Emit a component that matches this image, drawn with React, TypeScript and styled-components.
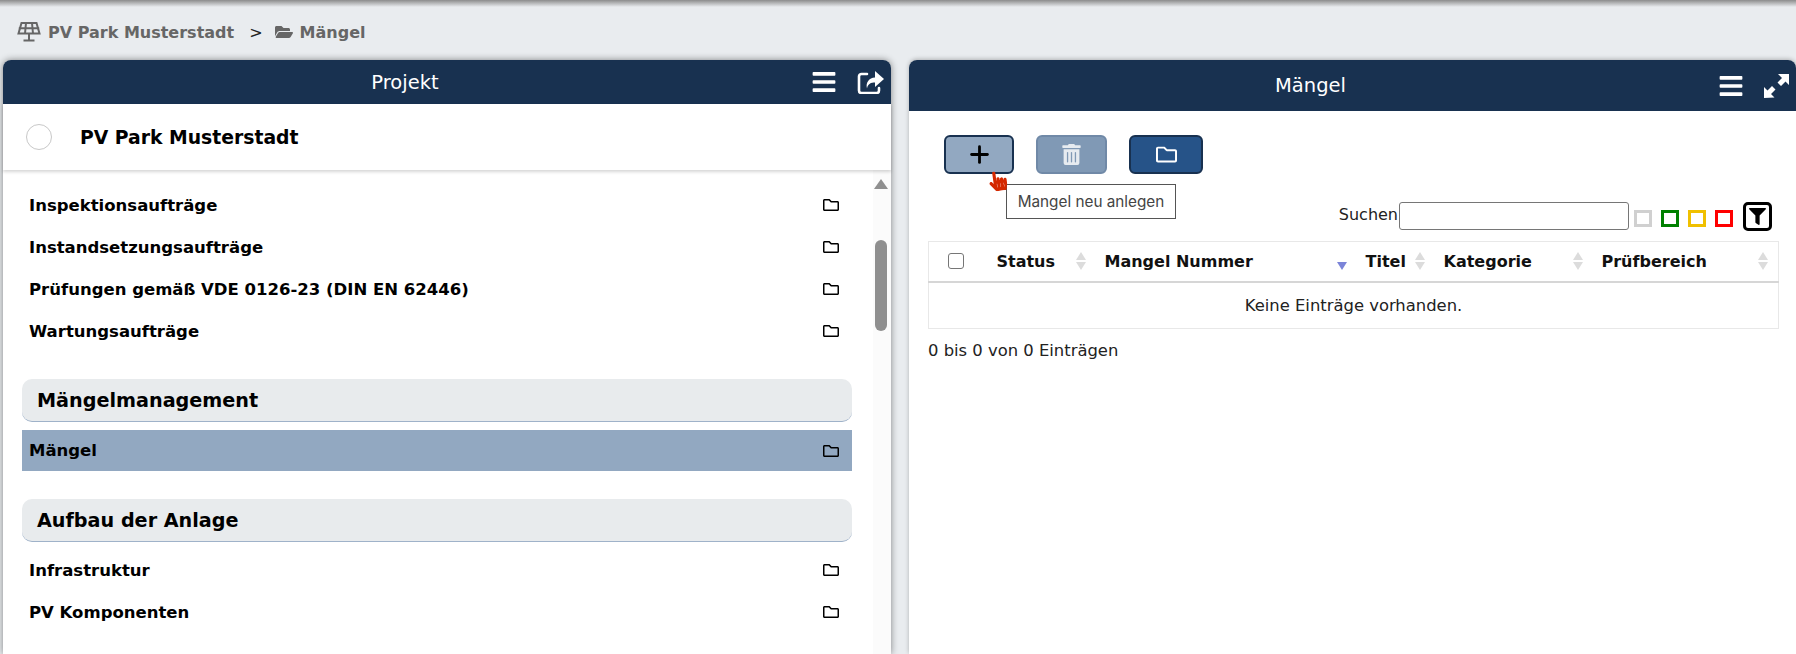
import React from "react";
import styled, { createGlobalStyle } from "styled-components";
import { Plus } from "lucide-react";
import {
  FaBars,
  FaFilter,
  FaFolderOpen,
  FaHandPointer,
  FaRegFolder,
  FaTrashAlt,
} from "react-icons/fa";

const GlobalStyle = createGlobalStyle`
  html, body {
    margin: 0;
    height: 100%;
    overflow: hidden;
    background: #e9ecef;
    font-family: "DejaVu Sans", Verdana, sans-serif;
  }
`;

const Page = styled.div`
  height: 654px;
  display: flex;
  flex-direction: column;
  overflow: hidden;
`;

const TopShade = styled.div`
  height: 7px;
  flex: none;
  background: linear-gradient(#8c8c8c, #e9ecef);
`;

const Breadcrumb = styled.nav`
  height: 53px;
  flex: none;
  display: flex;
  align-items: center;
  padding: 0 0 3px 17px;
  box-sizing: border-box;
  color: #666;
  font-size: 16px;
  font-weight: 700;
`;

const Crumb = styled.span`
  display: flex;
  align-items: center;
  gap: 7px;
`;

const Chevron = styled.span`
  margin: 0 12px 0 15px;
  color: #222;
  font-weight: 400;
`;

const Panels = styled.div`
  flex: 1;
  min-height: 0;
  display: grid;
  grid-template-columns: 888px 887px;
  column-gap: 18px;
  padding-left: 3px;
`;

const Panel = styled.section`
  background: #fff;
  display: flex;
  flex-direction: column;
  border-radius: 8px 8px 0 0;
  box-shadow: 0 0 7px rgba(0, 0, 0, 0.45);
`;

const RightPanel = styled(Panel)`
  box-shadow: 0 -1px 4px rgba(0, 0, 0, 0.25);
`;

const PanelHeader = styled.header<{ $height: number }>`
  height: ${(p) => p.$height}px;
  flex: none;
  position: relative;
  display: flex;
  align-items: center;
  justify-content: center;
  padding-right: 84px;
  background: #183150;
  color: #fff;
  font-size: 19.5px;
  border-radius: 8px 8px 0 0;
`;

const HeaderTools = styled.div`
  position: absolute;
  right: 7px;
  top: 0;
  bottom: 0;
  display: flex;
  align-items: center;
  gap: 20px;
  font-size: 26px;
`;

const ToolIcon = styled.span`
  display: flex;
  align-items: center;
`;

const ProjectRow = styled.div`
  height: 66px;
  flex: none;
  display: flex;
  align-items: center;
  gap: 28px;
  padding-left: 23px;
  box-shadow: 0 2px 3px rgba(0, 0, 0, 0.16);
  position: relative;
  z-index: 1;
  font-size: 18.8px;
  font-weight: 700;
  color: #000;
`;

const Circle = styled.span`
  width: 26px;
  height: 26px;
  box-sizing: border-box;
  border: 1px solid #c8c8c8;
  border-radius: 50%;
`;

const ListArea = styled.div`
  flex: 1;
  min-height: 0;
  display: flex;
`;

const List = styled.div`
  flex: 1;
  min-width: 0;
  padding: 14px 21px 0 19px;
`;

const Row = styled.div<{ $selected?: boolean }>`
  height: ${(p) => (p.$selected ? 41 : 42)}px;
  margin: ${(p) => (p.$selected ? "8px 0 28px" : "0")};
  display: flex;
  align-items: center;
  justify-content: space-between;
  padding: 0 13px 0 7px;
  font-size: 16.5px;
  font-weight: 700;
  color: #000;
  background: ${(p) => (p.$selected ? "#92a8c1" : "transparent")};
  svg {
    font-size: 16px;
  }
`;

const SectionTitle = styled.h2`
  height: 43px;
  box-sizing: border-box;
  margin: 27px 0 7px;
  padding: 1px 15px 0;
  display: flex;
  align-items: center;
  background: #e8ebed;
  border-bottom: 1px solid #9fb2c9;
  border-radius: 10px;
  font-size: 19.2px;
  font-weight: 700;
  color: #000;
`;

const ScrollTrack = styled.div`
  width: 18px;
  flex: none;
  box-sizing: border-box;
  background: #fbfbfb;
  display: flex;
  flex-direction: column;
  align-items: center;
  padding: 9px 2px 0 0;
`;

const ScrollArrow = styled.span`
  width: 0;
  height: 0;
  border-left: 7px solid transparent;
  border-right: 7px solid transparent;
  border-bottom: 10px solid #8f8f8f;
`;

const ScrollThumb = styled.span`
  width: 12px;
  height: 91px;
  margin-top: 51px;
  background: #8f8f8f;
  border-radius: 6px;
`;

const PanelBody = styled.div`
  flex: 1;
  padding: 24px 18px 0 19px;
  display: flex;
  flex-direction: column;
`;

const Toolbar = styled.div`
  display: flex;
  gap: 22px;
  padding-left: 16px;
  position: relative;
`;

const ActionButton = styled.button<{ $bg: string; $border: string; $color: string; $width: number }>`
  width: ${(p) => p.$width}px;
  height: 39px;
  padding: 0;
  display: flex;
  align-items: center;
  justify-content: center;
  background: ${(p) => p.$bg};
  border: 2px solid ${(p) => p.$border};
  border-radius: 6px;
  color: ${(p) => p.$color};
`;

const Tooltip = styled.div`
  position: absolute;
  left: 78px;
  top: 49px;
  width: 170px;
  height: 35px;
  box-sizing: border-box;
  display: flex;
  align-items: center;
  justify-content: center;
  background: #fff;
  border: 1px solid #555;
  color: #444;
  font-family: Inter, "Noto Sans", sans-serif;
  font-size: 15.3px;
  z-index: 2;
`;

const Cursor = styled.span`
  position: absolute;
  left: 60px;
  top: 36px;
  display: flex;
  color: #d42800;
  font-size: 20px;
  transform: rotate(-8deg);
  z-index: 3;
`;

const SearchBar = styled.div`
  display: flex;
  align-items: center;
  justify-content: flex-end;
  margin-top: 27px;
  padding-right: 6px;
  height: 30px;
  font-size: 16px;
  color: #222;
`;

const SearchLabel = styled.label`
  margin-bottom: 3px;
`;

const SearchInput = styled.input`
  width: 230px;
  height: 28px;
  box-sizing: border-box;
  margin: 0 5px 0 1px;
  border: 1px solid #767676;
  border-radius: 3px;
  background: #fff;
`;

const StatusBox = styled.span<{ $color: string }>`
  width: 18px;
  height: 17px;
  box-sizing: border-box;
  margin: 4px 9px 0 0;
  border: 3px solid ${(p) => p.$color};
`;

const FilterBox = styled.span`
  width: 29px;
  height: 29px;
  box-sizing: border-box;
  margin-left: 1px;
  display: flex;
  align-items: center;
  justify-content: center;
  border: 3px solid #000;
  border-radius: 5px;
  color: #000;
  font-size: 17px;
`;

const Table = styled.table`
  width: 850px;
  margin-top: 10px;
  border-collapse: collapse;
  table-layout: fixed;
  font-size: 16.4px;
  color: #222;
`;

const Th = styled.th<{ $width: number }>`
  width: ${(p) => p.$width}px;
  height: 40px;
  box-sizing: border-box;
  padding: 0 10px 0 9px;
  border-top: 1px solid #e8e8e8;
  border-bottom: 2px solid #d6d6d6;
  text-align: left;
  font-size: 16px;
  color: #111;
  &:first-child {
    border-left: 1px solid #e8e8e8;
  }
  &:last-child {
    border-right: 1px solid #e8e8e8;
  }
`;

const ThInner = styled.div`
  display: flex;
  align-items: center;
  justify-content: space-between;
  white-space: nowrap;
`;

const SortArrows = styled.span`
  display: flex;
  flex-direction: column;
  gap: 2px;
`;

const SortUp = styled.i<{ $hidden?: boolean }>`
  width: 0;
  height: 0;
  border-left: 5px solid transparent;
  border-right: 5px solid transparent;
  border-bottom: 8px solid ${(p) => (p.$hidden ? "transparent" : "#dcdcdc")};
`;

const SortDown = styled.i<{ $active?: boolean }>`
  width: 0;
  height: 0;
  border-left: 5px solid transparent;
  border-right: 5px solid transparent;
  border-top: 8px solid ${(p) => (p.$active ? "#7b84d8" : "#dcdcdc")};
`;

const RowCheck = styled.span`
  display: block;
  width: 16px;
  height: 16px;
  box-sizing: border-box;
  margin-left: 10px;
  border: 1px solid #767676;
  border-radius: 3px;
`;

const EmptyCell = styled.td`
  height: 45px;
  padding: 0;
  border: 1px solid #e8e8e8;
  border-top: none;
  text-align: center;
`;

const Info = styled.div`
  margin-top: 12px;
  font-size: 16.4px;
  color: #222;
`;

const SolarIcon = () => (
  <svg width="24" height="22" viewBox="0 0 24 22" fill="none" stroke="#666" strokeWidth="2">
    <path d="M4.500 2h15l3 10.500h-21z" />
    <path d="M1.800 7.200h20.400M9 2l-1 10.500M15 2l1 10.500M12 12.500v6M6.500 19.500h11" />
  </svg>
);

const ShareIcon = () => (
  <svg width="27" height="23" viewBox="0 0 27 23" fill="none">
    <path
      d="M10 3H4.500A2.500 2.500 0 0 0 2 5.500v14A2.500 2.500 0 0 0 4.500 22h15a2.500 2.500 0 0 0 2.500-2.500V17"
      stroke="#fff"
      strokeWidth="2.600"
      strokeLinecap="round"
    />
    <path d="M18 0l9 8-9 8v-4.500c-4 0-7 1-8 6-1.500-6 2-10.500 8-11z" fill="#fff" />
  </svg>
);

const ExpandIcon = () => (
  <svg width="25" height="24" viewBox="0 0 25 24" fill="#fff">
    <path d="M14 0h11v11l-3.500-3.500-4.500 4.500-3.500-3.500 4.500-4.500z" />
    <path d="M0 24V13l3.500 3.500 4.500-4.500 3.500 3.500-4.500 4.500 3.500 3.500z" />
  </svg>
);

const COLUMNS = [
  { title: "Status", width: 108 },
  { title: "Mangel Nummer", width: 261, active: true },
  { title: "Titel", width: 78 },
  { title: "Kategorie", width: 158 },
  { title: "Prüfbereich", width: 186 },
];

const FolderRow = ({ label, selected }: { label: string; selected?: boolean }) => (
  <Row $selected={selected}>
    {label}
    <FaRegFolder />
  </Row>
);

export default function App() {
  return (
    <Page>
      <GlobalStyle />
      <TopShade />
      <Breadcrumb>
        <Crumb>
          <SolarIcon />
          PV Park Musterstadt
        </Crumb>
        <Chevron>&gt;</Chevron>
        <Crumb>
          <FaFolderOpen size={18} />
          Mängel
        </Crumb>
      </Breadcrumb>
      <Panels>
        <Panel>
          <PanelHeader $height={44}>
            Projekt
            <HeaderTools>
              <ToolIcon>
                <FaBars />
              </ToolIcon>
              <ToolIcon>
                <ShareIcon />
              </ToolIcon>
            </HeaderTools>
          </PanelHeader>
          <ProjectRow>
            <Circle />
            PV Park Musterstadt
          </ProjectRow>
          <ListArea>
            <List>
              <FolderRow label="Inspektionsaufträge" />
              <FolderRow label="Instandsetzungsaufträge" />
              <FolderRow label="Prüfungen gemäß VDE 0126-23 (DIN EN 62446)" />
              <FolderRow label="Wartungsaufträge" />
              <SectionTitle>Mängelmanagement</SectionTitle>
              <FolderRow label="Mängel" selected />
              <SectionTitle>Aufbau der Anlage</SectionTitle>
              <FolderRow label="Infrastruktur" />
              <FolderRow label="PV Komponenten" />
            </List>
            <ScrollTrack>
              <ScrollArrow />
              <ScrollThumb />
            </ScrollTrack>
          </ListArea>
        </Panel>
        <RightPanel>
          <PanelHeader $height={51}>
            Mängel
            <HeaderTools>
              <ToolIcon>
                <FaBars />
              </ToolIcon>
              <ToolIcon>
                <ExpandIcon />
              </ToolIcon>
            </HeaderTools>
          </PanelHeader>
          <PanelBody>
            <Toolbar>
              <ActionButton $bg="#92a8c1" $border="#183150" $color="#000" $width={70}>
                <Plus size={27} strokeWidth={2.5} />
              </ActionButton>
              <ActionButton $bg="#8099b5" $border="#7089a7" $color="#e6ebf0" $width={71}>
                <FaTrashAlt size={21} />
              </ActionButton>
              <ActionButton $bg="#265388" $border="#183150" $color="#fff" $width={74}>
                <FaRegFolder size={21} />
              </ActionButton>
              <Cursor>
                <FaHandPointer />
              </Cursor>
              <Tooltip>Mangel neu anlegen</Tooltip>
            </Toolbar>
            <SearchBar>
              <SearchLabel>Suchen</SearchLabel>
              <SearchInput />
              <StatusBox $color="#d0d0d0" />
              <StatusBox $color="#008000" />
              <StatusBox $color="#f0c000" />
              <StatusBox $color="#ff0000" />
              <FilterBox>
                <FaFilter />
              </FilterBox>
            </SearchBar>
            <Table>
              <thead>
                <tr>
                  <Th $width={59}>
                    <RowCheck />
                  </Th>
                  {COLUMNS.map((c) => (
                    <Th key={c.title} $width={c.width}>
                      <ThInner>
                        {c.title}
                        <SortArrows>
                          <SortUp $hidden={c.active} />
                          <SortDown $active={c.active} />
                        </SortArrows>
                      </ThInner>
                    </Th>
                  ))}
                </tr>
              </thead>
              <tbody>
                <tr>
                  <EmptyCell colSpan={6}>Keine Einträge vorhanden.</EmptyCell>
                </tr>
              </tbody>
            </Table>
            <Info>0 bis 0 von 0 Einträgen</Info>
          </PanelBody>
        </RightPanel>
      </Panels>
    </Page>
  );
}
